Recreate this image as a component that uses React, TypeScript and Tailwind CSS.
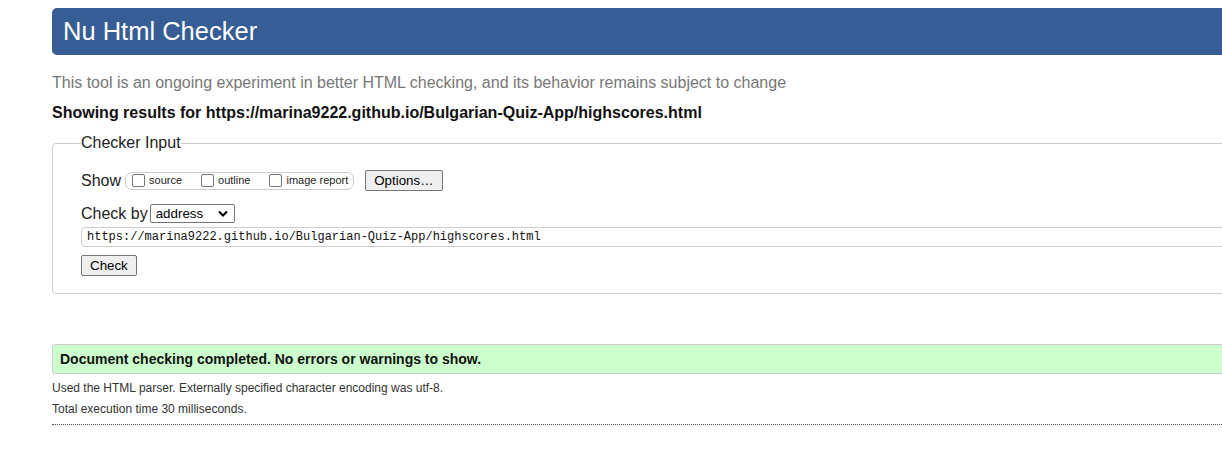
import React from 'react';

const sans = "font-['Liberation_Sans',Arial,sans-serif]";

function Box({ label }: { label: string }) {
  return (
    <span className="flex items-center">
      <span className="w-[13px] h-[13px] rounded-[2px] border border-[#767676] bg-white" />
      <span className="ml-[4px] text-[11px] leading-none text-[#222]">{label}</span>
    </span>
  );
}

function Btn({ children }: { children: React.ReactNode }) {
  return (
    <span className="inline-flex items-center h-[21px] px-[8px] rounded-[2px] border border-[#767676] bg-[#efefef] text-[13.33px] text-black">
      {children}
    </span>
  );
}

export default function App() {
  return (
    <div className={`w-[1222px] h-[470px] overflow-hidden bg-white ${sans}`}>
      <div className="pt-[8px] pl-[52px] w-[1250px]">
        <header className="h-[47px] rounded-[5px] bg-[#365d95] flex items-center px-[11px]">
          <h1 className="text-[25.5px] text-white leading-none">Nu Html Checker</h1>
        </header>

        <p className="mt-[19px] text-[16px] leading-[18px] text-[#777]">
          This tool is an ongoing experiment in better HTML checking, and its behavior remains subject to change
        </p>
        <p className="mt-[12px] text-[16px] leading-[18px] font-bold text-[#111]">
          Showing results for https://marina9222.github.io/Bulgarian-Quiz-App/highscores.html
        </p>

        <fieldset className="mt-[12px] border border-[#ccc] rounded-[4px] pl-[28px] pr-4 pt-[18px] pb-[17px]">
          <legend className="text-[16px] leading-[18px] text-[#222]">Checker Input</legend>

          <div className="flex items-center h-[21px]">
            <span className="text-[16px] text-[#222]">Show</span>
            <span className="ml-[4px] flex items-center gap-[19px] h-[18px] pl-[6px] pr-[5px] border border-[#ccc] rounded-[7px]">
              <Box label="source" />
              <Box label="outline" />
              <Box label="image report" />
            </span>
            <span className="ml-[11px] flex">
              <Btn>Options…</Btn>
            </span>
          </div>

          <div className="mt-[13px] flex items-center h-[19px]">
            <span className="text-[16px] text-[#222]">Check by</span>
            <span className="ml-[2px] w-[85px] h-[19px] flex items-center justify-between pl-[5px] pr-[6px] border border-[#767676] rounded-[2px] bg-white text-[13.33px] text-black">
              address
              <svg width="10" height="7" viewBox="0 0 10 7" fill="none">
                <path d="M1 1.5 5 5.5 9 1.5" stroke="#000" strokeWidth="2" />
              </svg>
            </span>
          </div>

          <div className="mt-[4px] h-[20px] flex items-center pl-[5px] border border-[#ccc] rounded-[4px] font-['Liberation_Mono',monospace] text-[12px] text-[#111]">
            https://marina9222.github.io/Bulgarian-Quiz-App/highscores.html
          </div>

          <div className="mt-[8px] flex">
            <Btn>Check</Btn>
          </div>
        </fieldset>

        <div className="mt-[50px] h-[30px] flex items-center pl-[7px] border border-[#ccc] rounded-l-[3px] bg-[#ccffcc] text-[14px] font-bold text-[#111]">
          Document checking completed. No errors or warnings to show.
        </div>

        <p className="mt-[7px] text-[12px] leading-[14px] text-[#333]">
          Used the HTML parser. Externally specified character encoding was utf-8.
        </p>
        <p className="mt-[7px] text-[12px] leading-[14px] text-[#333]">Total execution time 30 milliseconds.</p>

        <div className="mt-[8px] border-t border-dotted border-[#555]" />
      </div>
    </div>
  );
}
